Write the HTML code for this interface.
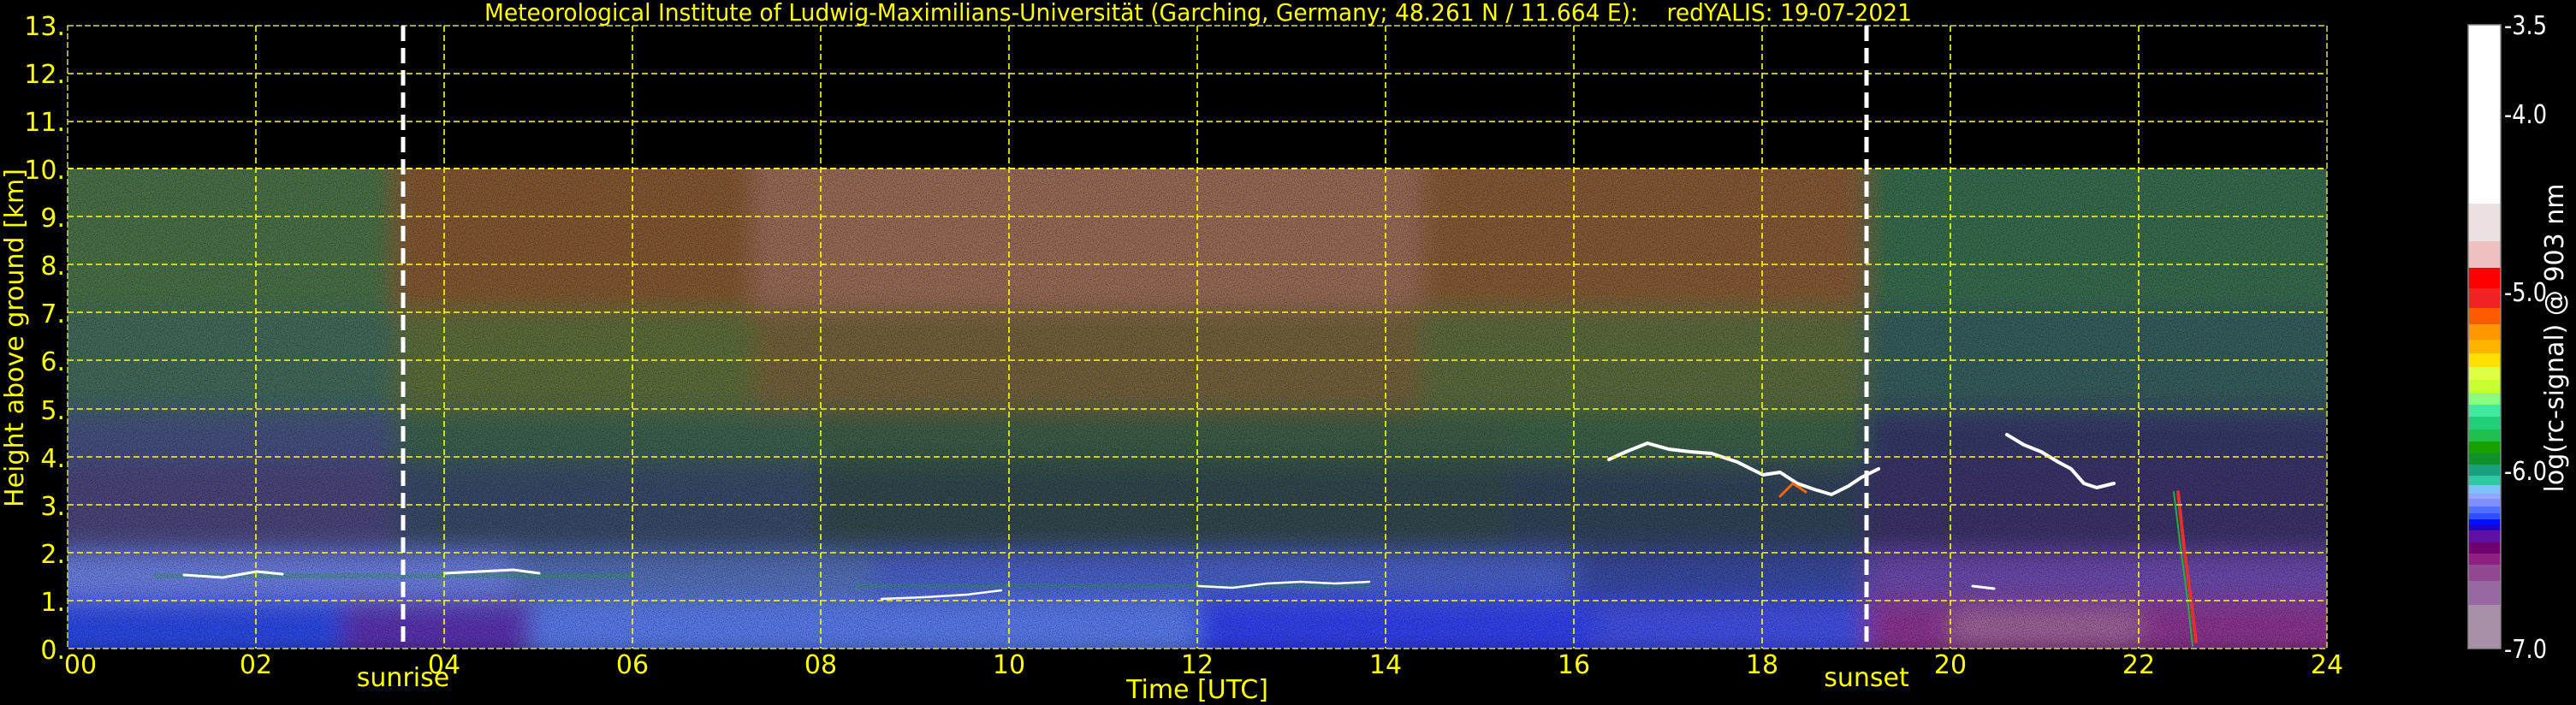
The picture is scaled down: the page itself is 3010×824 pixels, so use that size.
<!DOCTYPE html>
<html><head><meta charset="utf-8"><style>
html,body{margin:0;padding:0;background:#000;width:3010px;height:824px;overflow:hidden}
svg{display:block}
text{font-family:"DejaVu Sans","Liberation Sans",sans-serif}
</style></head><body>
<svg width="3010" height="824" viewBox="0 0 3010 824" xmlns="http://www.w3.org/2000/svg">
<defs>
<clipPath id="dc"><rect x="79" y="197" width="2640" height="561"/></clipPath>
<filter id="bl" x="-5%" y="-5%" width="110%" height="110%"><feGaussianBlur stdDeviation="14"/></filter>
<filter id="nz" x="0" y="0" width="100%" height="100%">
<feTurbulence type="fractalNoise" baseFrequency="0.9" numOctaves="1" seed="3" result="t"/>
<feColorMatrix in="t" type="matrix" values="0 0 0 0 0  0 0 0 0 0  0 0 0 0 0  0 0 0 -2.2 1.25"/>
</filter>
</defs>
<rect width="3010" height="824" fill="#000"/>
<g clip-path="url(#dc)">
<g filter="url(#bl)">
<rect x="40" y="160" width="420" height="200" fill="#4a7044"/>
<rect x="460" y="160" width="420" height="200" fill="#825632"/>
<rect x="880" y="160" width="780" height="200" fill="#986a56"/>
<rect x="1660" y="160" width="520" height="200" fill="#845834"/>
<rect x="2180" y="160" width="580" height="200" fill="#386a4c"/>
<rect x="40" y="360" width="420" height="120" fill="#406858"/>
<rect x="460" y="360" width="420" height="120" fill="#5c6c3a"/>
<rect x="880" y="360" width="780" height="120" fill="#72603a"/>
<rect x="1660" y="360" width="520" height="120" fill="#5a6a3c"/>
<rect x="2180" y="360" width="580" height="120" fill="#365c5c"/>
<rect x="40" y="480" width="420" height="60" fill="#44507e"/>
<rect x="460" y="480" width="500" height="60" fill="#3a604e"/>
<rect x="960" y="480" width="800" height="60" fill="#3a5c44"/>
<rect x="1760" y="480" width="420" height="60" fill="#3a6044"/>
<rect x="2180" y="480" width="580" height="60" fill="#363866"/>
<rect x="40" y="540" width="420" height="106" fill="#48447a"/>
<rect x="460" y="540" width="500" height="106" fill="#384a66"/>
<rect x="960" y="540" width="800" height="106" fill="#30464c"/>
<rect x="1760" y="540" width="420" height="106" fill="#30425a"/>
<rect x="2180" y="540" width="580" height="106" fill="#3a3068"/>
<rect x="40" y="646" width="560" height="56" fill="#6a7ee0"/>
<rect x="600" y="646" width="420" height="56" fill="#5270b8"/>
<rect x="1020" y="646" width="820" height="56" fill="#4a60c8"/>
<rect x="1840" y="646" width="340" height="56" fill="#3848a0"/>
<rect x="2180" y="646" width="580" height="56" fill="#6a48aa"/>
<rect x="40" y="702" width="360" height="70" fill="#2a48e4"/>
<rect x="400" y="702" width="220" height="70" fill="#5a30b0"/>
<rect x="620" y="702" width="380" height="70" fill="#5a7aec"/>
<rect x="1000" y="702" width="400" height="70" fill="#5a7aec"/>
<rect x="1400" y="702" width="460" height="70" fill="#3040ec"/>
<rect x="1860" y="702" width="320" height="70" fill="#4050e4"/>
<rect x="2180" y="702" width="580" height="70" fill="#8a3490"/>
<rect x="2280" y="715" width="220" height="35" fill="#a06a9a"/>
</g>
<rect x="180" y="670" width="560" height="6" fill="#2aa048" opacity="0.35"/>
<rect x="1000" y="682" width="600" height="6" fill="#2aa048" opacity="0.3"/>
<rect x="79" y="197" width="2640" height="561" filter="url(#nz)" opacity="0.55"/>
<g fill="none" stroke-linecap="round" stroke-linejoin="round">
<polyline points="1880,537 1900,528 1925,518 1950,525 1975,528 2000,530 2030,540 2060,555 2080,552 2100,565 2120,572 2140,578 2160,568 2175,558 2195,548" stroke="#ffffff" stroke-width="4"/>
<polyline points="2080,580 2095,565 2110,575" stroke="#ff6a00" stroke-width="3"/>
<polyline points="2345,508 2365,520 2385,528 2405,540 2420,548 2435,565 2450,570 2470,565" stroke="#ffffff" stroke-width="4"/>
<polyline points="2545,575 2552,640 2560,700 2566,750" stroke="#e03030" stroke-width="4"/>
<polyline points="2540,575 2548,640 2556,700 2562,755" stroke="#20b040" stroke-width="2"/>
<polyline points="215,672 260,675 300,668 330,671" stroke="#ffffff" stroke-width="3"/>
<polyline points="520,670 560,668 600,666 630,670" stroke="#ffffff" stroke-width="3"/>
<polyline points="1030,700 1080,698 1130,695 1170,690" stroke="#ffffff" stroke-width="2.5"/>
<polyline points="1400,685 1440,687 1480,682 1520,680 1560,682 1600,680" stroke="#ffffff" stroke-width="2.5"/>
<polyline points="2305,685 2330,688" stroke="#ffffff" stroke-width="3"/>
</g>
</g>
<g stroke="#ffff00" stroke-width="1.6" stroke-dasharray="7 4" fill="none">
<line x1="79" y1="86" x2="2719" y2="86"/>
<line x1="79" y1="142" x2="2719" y2="142"/>
<line x1="79" y1="197" x2="2719" y2="197" stroke-width="2"/>
<line x1="79" y1="253" x2="2719" y2="253"/>
<line x1="79" y1="309" x2="2719" y2="309"/>
<line x1="79" y1="365" x2="2719" y2="365"/>
<line x1="79" y1="421" x2="2719" y2="421"/>
<line x1="79" y1="478" x2="2719" y2="478"/>
<line x1="79" y1="534" x2="2719" y2="534"/>
<line x1="79" y1="590" x2="2719" y2="590"/>
<line x1="79" y1="646" x2="2719" y2="646"/>
<line x1="79" y1="702" x2="2719" y2="702"/>
<line x1="299" y1="30" x2="299" y2="758"/>
<line x1="519" y1="30" x2="519" y2="758"/>
<line x1="739" y1="30" x2="739" y2="758"/>
<line x1="959" y1="30" x2="959" y2="758"/>
<line x1="1179" y1="30" x2="1179" y2="758"/>
<line x1="1399" y1="30" x2="1399" y2="758"/>
<line x1="1619" y1="30" x2="1619" y2="758"/>
<line x1="1839" y1="30" x2="1839" y2="758"/>
<line x1="2059" y1="30" x2="2059" y2="758"/>
<line x1="2279" y1="30" x2="2279" y2="758"/>
<line x1="2499" y1="30" x2="2499" y2="758"/>
</g>
<rect x="79" y="30" width="2640" height="728" fill="none" stroke="#d8d860" stroke-width="1.5" stroke-dasharray="7 3"/>
<g stroke="#ffffff" stroke-width="5" stroke-dasharray="18 8">
<line x1="471" y1="30" x2="471" y2="758"/>
<line x1="2181" y1="30" x2="2181" y2="758"/>
</g>
<text x="566" y="24" font-size="28" fill="#ffff00" textLength="1668" lengthAdjust="spacingAndGlyphs" xml:space="preserve" style="white-space:pre">Meteorological Institute of Ludwig-Maximilians-Universität (Garching, Germany; 48.261 N / 11.664 E):    redYALIS: 19-07-2021</text>
<g font-size="30" fill="#ffff00" text-anchor="end">
<text x="76" y="41">13.</text><text x="76" y="97">12.</text><text x="76" y="153">11.</text>
<text x="76" y="209">10.</text><text x="76" y="265">9.</text><text x="76" y="321">8.</text>
<text x="76" y="377">7.</text><text x="76" y="433">6.</text><text x="76" y="490">5.</text>
<text x="76" y="546">4.</text><text x="76" y="602">3.</text><text x="76" y="658">2.</text>
<text x="76" y="714">1.</text><text x="76" y="770">0.</text>
</g>
<text transform="translate(27,395) rotate(-90)" font-size="30" fill="#ffff00" text-anchor="middle">Height above ground [km]</text>
<g font-size="30" fill="#ffff00" text-anchor="middle">
<text x="94" y="787">00</text><text x="299" y="787">02</text><text x="519" y="787">04</text>
<text x="739" y="787">06</text><text x="959" y="787">08</text><text x="1179" y="787">10</text>
<text x="1399" y="787">12</text><text x="1619" y="787">14</text><text x="1839" y="787">16</text>
<text x="2059" y="787">18</text><text x="2279" y="787">20</text><text x="2499" y="787">22</text>
<text x="2719" y="787">24</text>
<text x="471" y="802">sunrise</text><text x="2181" y="802">sunset</text>
<text x="1399" y="816">Time [UTC]</text>
</g>
<g>
<rect x="2884" y="29" width="38" height="210" fill="#ffffff"/>
<rect x="2884" y="238" width="38" height="45" fill="#ebe1e1"/>
<rect x="2884" y="282" width="38" height="32" fill="#efc1c1"/>
<rect x="2884" y="313" width="38" height="25" fill="#ff0000"/>
<rect x="2884" y="337" width="38" height="24" fill="#f02222"/>
<rect x="2884" y="360" width="38" height="20" fill="#ff5a00"/>
<rect x="2884" y="379" width="38" height="19" fill="#ff9800"/>
<rect x="2884" y="397" width="38" height="17" fill="#ffb400"/>
<rect x="2884" y="413" width="38" height="17" fill="#ffe000"/>
<rect x="2884" y="429" width="38" height="16" fill="#e0ff40"/>
<rect x="2884" y="444" width="38" height="16" fill="#c8ff30"/>
<rect x="2884" y="459" width="38" height="15" fill="#88ff80"/>
<rect x="2884" y="473" width="38" height="15" fill="#40e8a0"/>
<rect x="2884" y="487" width="38" height="16" fill="#20d078"/>
<rect x="2884" y="502" width="38" height="15" fill="#20c050"/>
<rect x="2884" y="516" width="38" height="15" fill="#18a000"/>
<rect x="2884" y="530" width="38" height="14" fill="#10902a"/>
<rect x="2884" y="543" width="38" height="14" fill="#18a080"/>
<rect x="2884" y="556" width="38" height="12" fill="#30c8a0"/>
<rect x="2884" y="567" width="38" height="11" fill="#80c0ff"/>
<rect x="2884" y="577" width="38" height="7" fill="#90a8ff"/>
<rect x="2884" y="583" width="38" height="10" fill="#8090ff"/>
<rect x="2884" y="592" width="38" height="9" fill="#5070ff"/>
<rect x="2884" y="600" width="38" height="8" fill="#3050ff"/>
<rect x="2884" y="607" width="38" height="8" fill="#0010ff"/>
<rect x="2884" y="614" width="38" height="7" fill="#2000c0"/>
<rect x="2884" y="620" width="38" height="15" fill="#6010a0"/>
<rect x="2884" y="634" width="38" height="14" fill="#700070"/>
<rect x="2884" y="647" width="38" height="14" fill="#902080"/>
<rect x="2884" y="660" width="38" height="20" fill="#904890"/>
<rect x="2884" y="679" width="38" height="29" fill="#9868a0"/>
<rect x="2884" y="707" width="38" height="51" fill="#a890a8"/>
<rect x="2884" y="29" width="38" height="729" fill="none" stroke="#888" stroke-width="1.5"/>
</g>
<g font-size="30" fill="#ffffff">
<text x="2926" y="40" textLength="50" lengthAdjust="spacingAndGlyphs">-3.5</text>
<text x="2926" y="144" textLength="50" lengthAdjust="spacingAndGlyphs">-4.0</text>
<text x="2926" y="352" textLength="50" lengthAdjust="spacingAndGlyphs">-5.0</text>
<text x="2926" y="561" textLength="50" lengthAdjust="spacingAndGlyphs">-6.0</text>
<text x="2926" y="769" textLength="50" lengthAdjust="spacingAndGlyphs">-7.0</text>
</g>
<text transform="translate(2995,395) rotate(-90)" font-size="30" fill="#ffffff" text-anchor="middle">log(rc-signal) @ 903 nm</text>
</svg>
</body></html>
